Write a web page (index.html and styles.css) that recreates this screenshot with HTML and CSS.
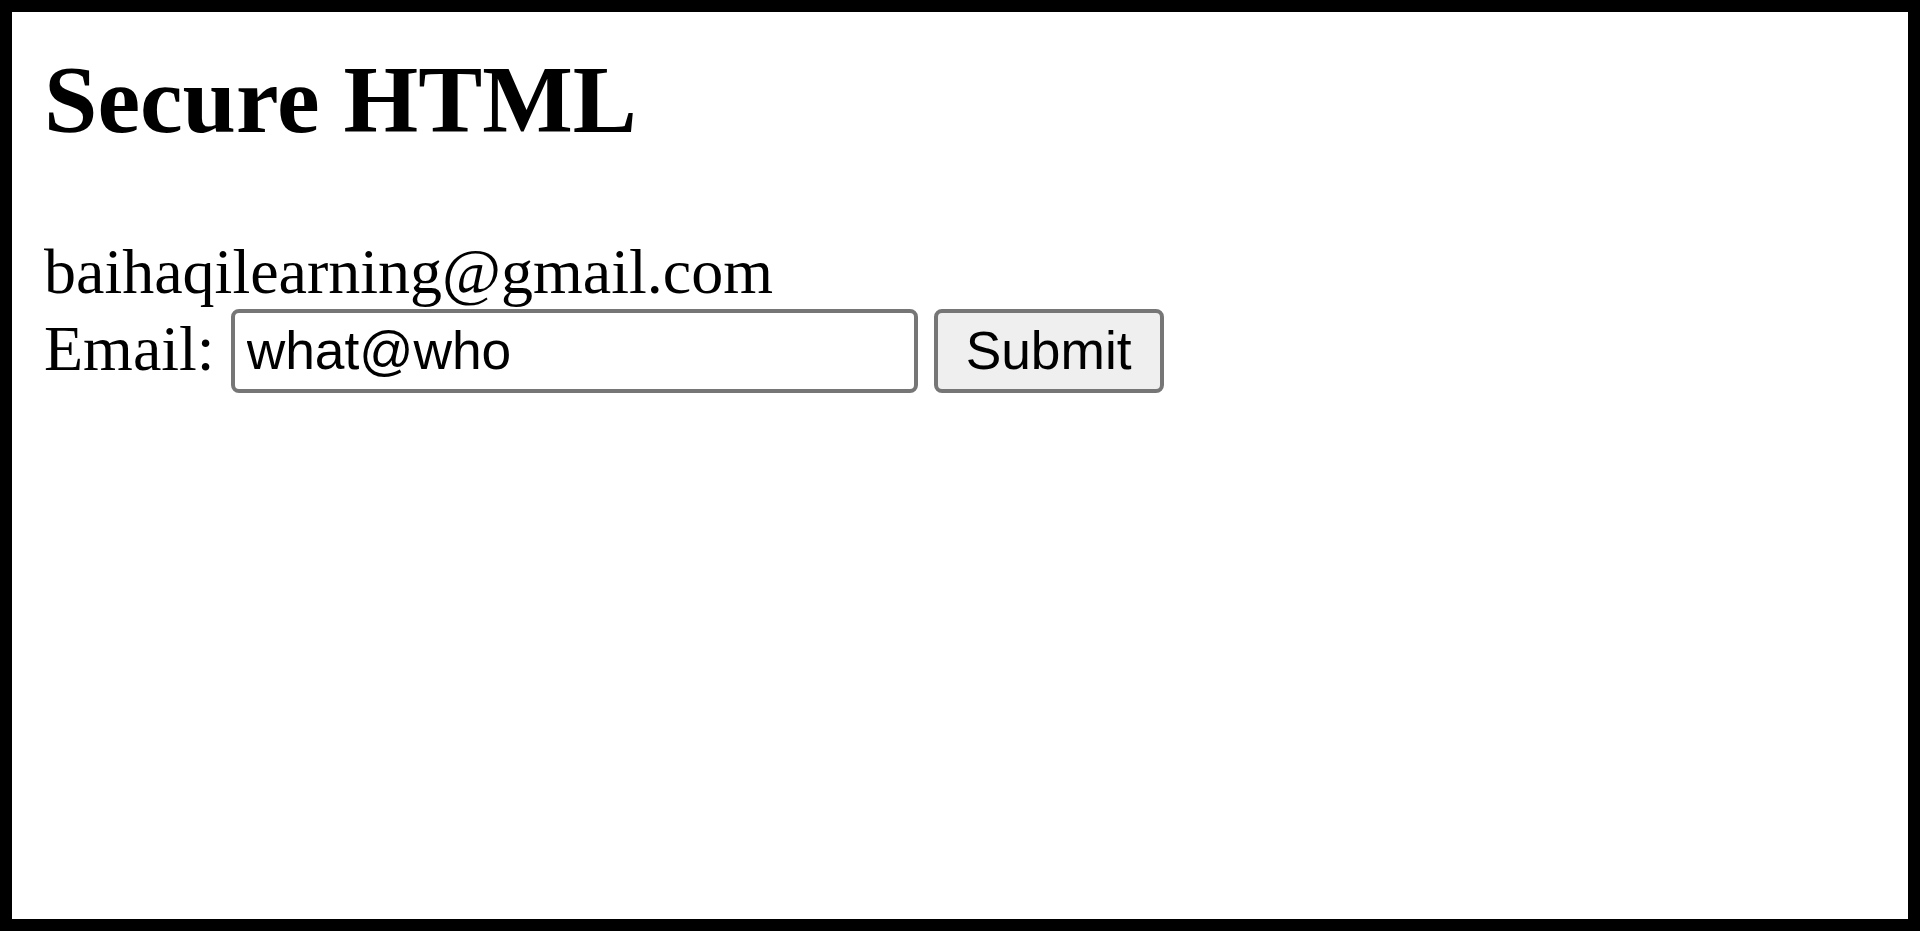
FILE: index.html
```html
<!DOCTYPE html>
<html lang="en">
<head>
<meta charset="utf-8">
<title>Secure HTML</title>
<link rel="stylesheet" href="styles.css">
</head>
<body>
<h2 class="title">Secure HTML</h2>
<form class="form">
<span class="email-display">baihaqilearning@gmail.com</span><br>
<label class="label" for="email">Email:</label> <input class="field" id="email" type="text" value="what@who"> <button class="submit" type="button">Submit</button>
</form>
</body>
</html>
```
FILE: styles.css
```css
html {
  box-sizing: border-box;
  height: 100%;
  border: 12px solid #000;
  background: #fff;
}
body {
  margin: 32px;
  font-family: "Liberation Serif", "Times New Roman", serif;
  font-size: 64px;
  color: #000;
}
.title {
  margin: 0 0 79.68px;
  font-size: 96px;
  font-weight: bold;
}
.form {
  margin: 0;
}
.field {
  box-sizing: border-box;
  width: 687px;
  height: 84px;
  margin: 0;
  padding: 8px 12px;
  border: 4px solid #767676;
  border-radius: 8px;
  background: #fff;
  color: #000;
  font-family: "Liberation Sans", Arial, sans-serif;
  font-size: 53.33px;
  vertical-align: baseline;
  outline: none;
}
.submit {
  box-sizing: border-box;
  height: 84px;
  margin: 0;
  padding: 4px 28px;
  border: 4px solid #767676;
  border-radius: 8px;
  background: #efefef;
  color: #000;
  font-family: "Liberation Sans", Arial, sans-serif;
  font-size: 53.33px;
}
```
